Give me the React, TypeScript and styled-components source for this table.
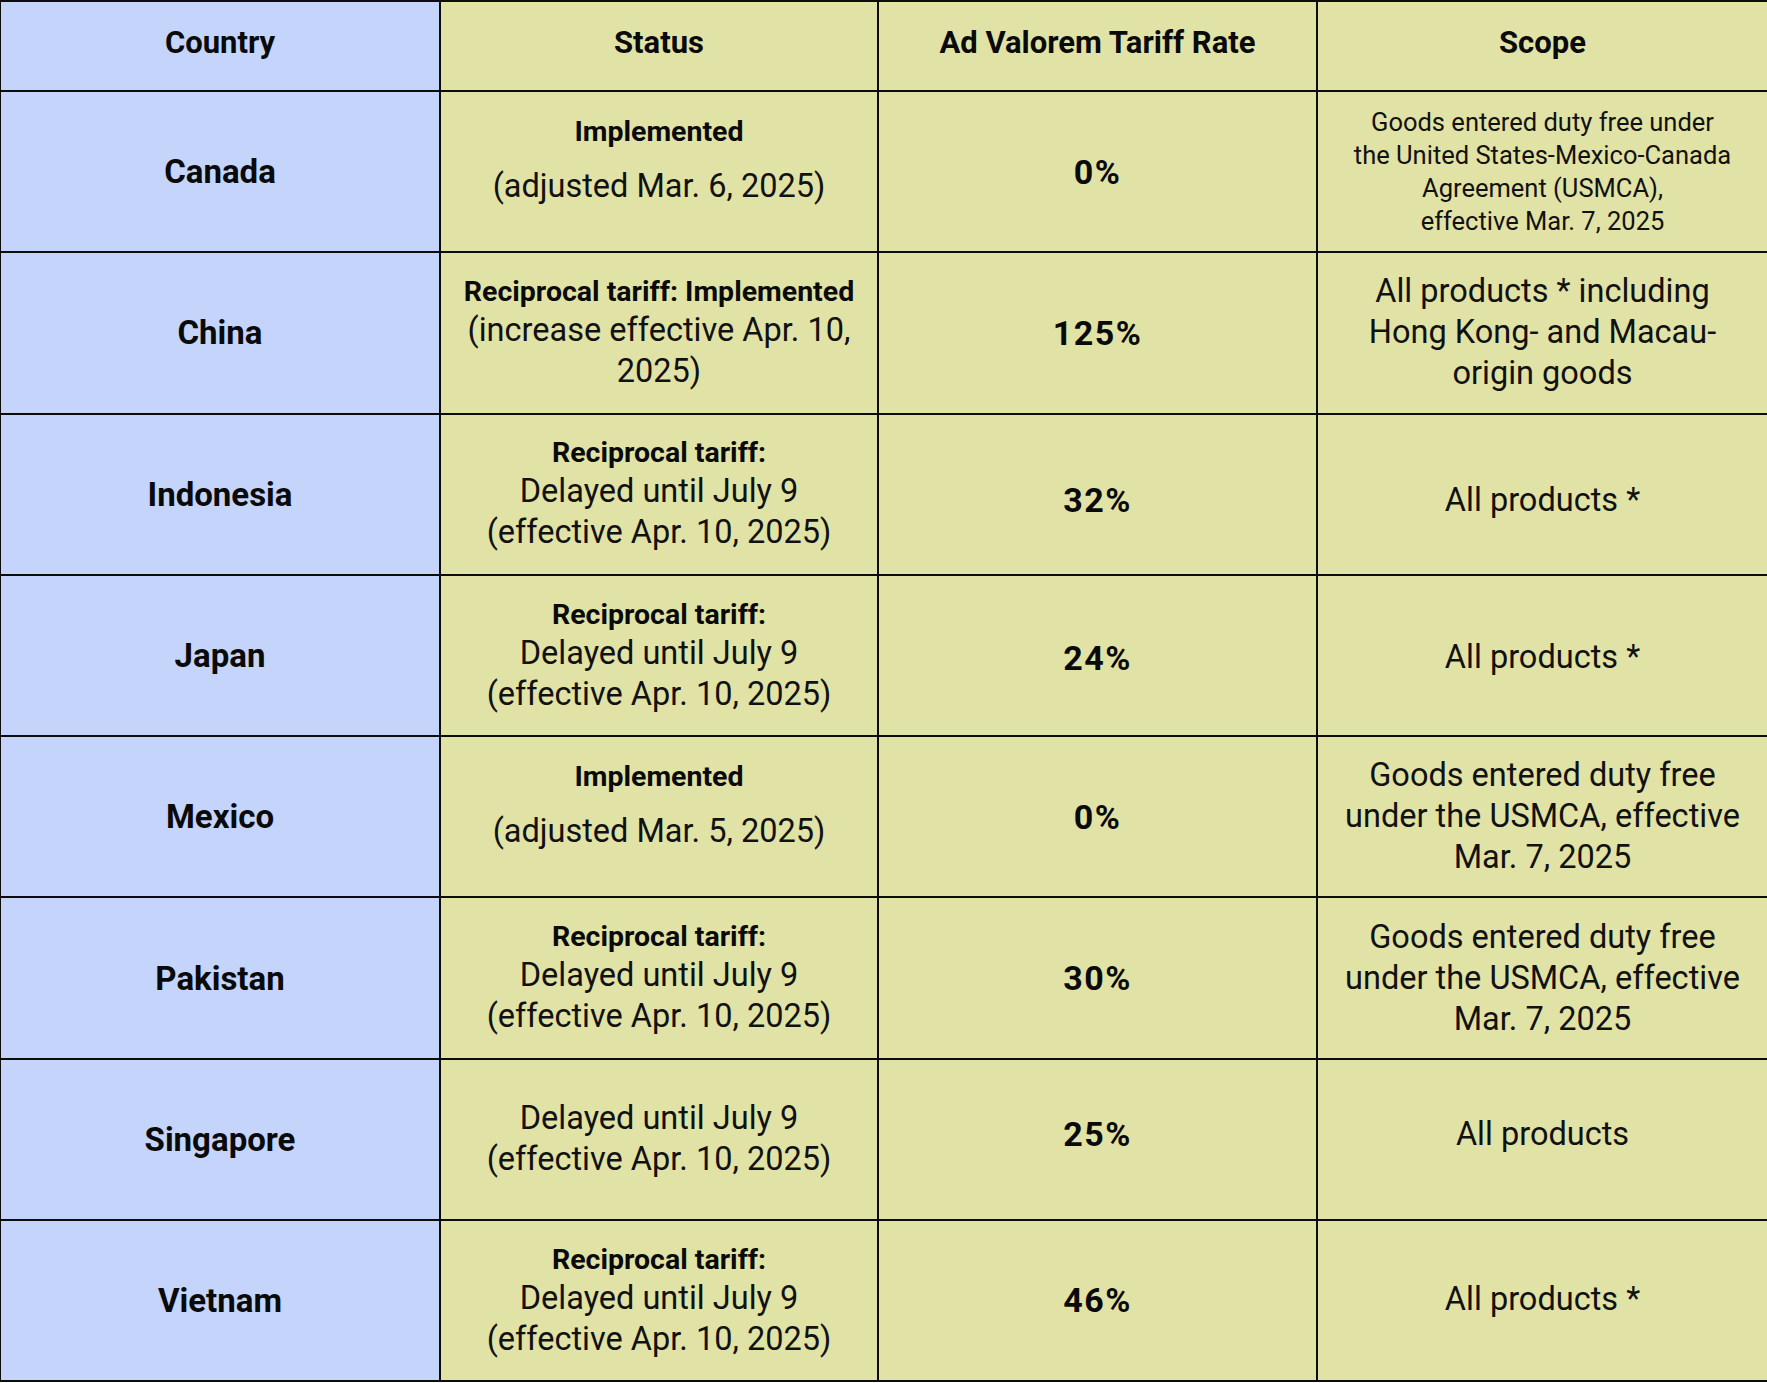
import React from 'react';
import styled, { createGlobalStyle } from 'styled-components';

const GlobalStyle = createGlobalStyle`
    html, body {
        margin: 0;
        padding: 0;
        background: #ffffff;
        overflow: hidden;
    }
    body {
        font-family: Roboto, "Liberation Sans", Arial, sans-serif;
        color: #111;
    }
`;

const Table = styled.div`
    width: 1767px;
    box-sizing: border-box;
    display: grid;
    grid-template-columns: 438px 436px 437px 449px;
    grid-template-rows: 88px repeat(8, 159.3px);
    gap: 2px;
    padding: 2px 0 2px 1px;
    background: #0c0c0c;
`;

const Cell = styled.div<{ $country?: boolean; $top?: number; $bottom?: number }>`
    display: flex;
    flex-direction: column;
    align-items: center;
    justify-content: center;
    text-align: center;
    padding: ${(p) => p.$top || 0}px 10px ${(p) => p.$bottom || 0}px;
    background: ${(p) => (p.$country ? '#c4d4fb' : '#e1e2a6')};
`;

const Heading = styled.span`
    font-size: 31px;
    font-weight: 700;
    color: #0a0a0a;
`;

const Name = styled.span`
    font-size: 33px;
    font-weight: 700;
    color: #0a0a0a;
`;

const Rate = styled.span`
    font-size: 34px;
    font-weight: 700;
    letter-spacing: 1.5px;
    color: #0a0a0a;
`;

const Label = styled.span`
    font-size: 28.5px;
    line-height: 36px;
    font-weight: 700;
    color: #0a0a0a;
`;

const Line = styled.span<{ $gap?: number }>`
    font-size: 32.5px;
    line-height: 41px;
    margin-top: ${(p) => p.$gap || 0}px;
    color: #111;
`;

const Fine = styled.span`
    font-size: 25.5px;
    line-height: 33px;
    color: #111;
`;

interface IStatus {
    label?: string;
    lines: string[];
    spaced?: boolean;
}

interface IScope {
    lines: string[];
    small?: boolean;
}

interface IRow {
    country: string;
    status: IStatus;
    rate: string;
    scope: IScope;
    shift?: number;
}

const delayed: IStatus = {
    label: 'Reciprocal tariff:',
    lines: ['Delayed until July 9', '(effective Apr. 10, 2025)'],
};

const usmca: IScope = {
    lines: ['Goods entered duty free', 'under the USMCA, effective', 'Mar. 7, 2025'],
};

const allStar: IScope = { lines: ['All products *'] };

const rows: IRow[] = [
    {
        country: 'Canada',
        status: { label: 'Implemented', lines: ['(adjusted Mar. 6, 2025)'], spaced: true },
        rate: '0%',
        scope: {
            small: true,
            lines: [
                'Goods entered duty free under',
                'the United States-Mexico-Canada',
                'Agreement (USMCA),',
                'effective Mar. 7, 2025',
            ],
        },
    },
    {
        country: 'China',
        status: {
            label: 'Reciprocal tariff: Implemented',
            lines: ['(increase effective Apr. 10,', '2025)'],
        },
        rate: '125%',
        scope: { lines: ['All products * including', 'Hong Kong- and Macau-', 'origin goods'] },
    },
    { country: 'Indonesia', status: delayed, rate: '32%', scope: allStar, shift: 6 },
    { country: 'Japan', status: delayed, rate: '24%', scope: allStar, shift: 2 },
    {
        country: 'Mexico',
        status: { label: 'Implemented', lines: ['(adjusted Mar. 5, 2025)'], spaced: true },
        rate: '0%',
        scope: usmca,
    },
    { country: 'Pakistan', status: delayed, rate: '30%', scope: usmca },
    {
        country: 'Singapore',
        status: { lines: ['Delayed until July 9', '(effective Apr. 10, 2025)'] },
        rate: '25%',
        scope: { lines: ['All products'] },
        shift: -5,
    },
    { country: 'Vietnam', status: delayed, rate: '46%', scope: allStar, shift: -1 },
];

const App: React.FC = () => {
    return (
        <>
            <GlobalStyle />
            <Table>
                <Cell $country $bottom={7}><Heading>Country</Heading></Cell>
                <Cell $bottom={7}><Heading>Status</Heading></Cell>
                <Cell $bottom={7}><Heading>Ad Valorem Tariff Rate</Heading></Cell>
                <Cell $bottom={7}><Heading>Scope</Heading></Cell>

                {rows.map((row) => {
                    const shift = row.shift || 0;
                    const top = shift > 0 ? shift * 2 : 0;
                    const bottom = shift < 0 ? -shift * 2 : 0;
                    return (
                        <React.Fragment key={row.country}>
                            <Cell $country><Name>{row.country}</Name></Cell>
                            <Cell $bottom={row.status.spaced ? 22 : 0}>
                                {row.status.label && <Label>{row.status.label}</Label>}
                                {row.status.lines.map((line, i) => (
                                    <Line key={i} $gap={row.status.spaced && i === 0 ? 16 : 0}>{line}</Line>
                                ))}
                            </Cell>
                            <Cell $top={top} $bottom={bottom}><Rate>{row.rate}</Rate></Cell>
                            <Cell $top={top} $bottom={bottom}>
                                {row.scope.lines.map((line, i) =>
                                    row.scope.small
                                        ? <Fine key={i}>{line}</Fine>
                                        : <Line key={i}>{line}</Line>
                                )}
                            </Cell>
                        </React.Fragment>
                    );
                })}
            </Table>
        </>
    );
};

export default App;
